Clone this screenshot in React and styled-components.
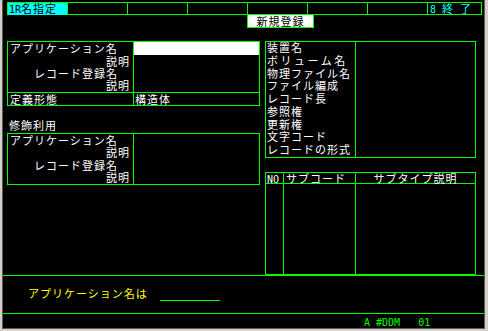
import React from "react";
import styled, { createGlobalStyle } from "styled-components";

const GREEN = "#00ff00";
const CYAN = "#00ffff";
const YELLOW = "#ffff00";

const GlobalStyle = createGlobalStyle`
  html, body {
    margin: 0;
    padding: 0;
    background: #d4d0c8;
  }
  * { box-sizing: border-box; }
`;

const Window = styled.div`
  width: 488px;
  height: 331px;
  background: #d4d0c8;
  padding: 0 3px 2px 2px;
`;

const Screen = styled.div`
  height: 100%;
  background: #000;
  border: 1px solid #5a5a5a;
  border-top: none;
  display: flex;
  flex-direction: column;
  color: #fff;
  font-family: "Noto Sans CJK JP", sans-serif;
  font-size: 11px;
  letter-spacing: 1px;
  line-height: 13px;
  white-space: pre;
`;

const Mono = styled.span`
  font-family: "DejaVu Sans Mono", monospace;
  font-size: 10px;
  letter-spacing: 0;
`;

const TopBar = styled.div`
  margin: 2px 0 0 4px;
  width: 475px;
  height: 13px;
  border: 1px solid ${GREEN};
  display: grid;
  grid-template-columns: repeat(7, 60px) 1fr;
`;

const BarCell = styled.div`
  border-right: ${(p) => (p.$last ? "none" : `1px solid ${GREEN}`)};
  background: ${(p) => p.$bg || "transparent"};
  color: ${(p) => p.$color || "#fff"};
  line-height: 11px;
  padding-left: ${(p) => p.$pad || 1}px;
`;

const NewButton = styled.div`
  margin-left: 244px;
  width: 67px;
  height: 13px;
  background: #fff;
  color: #000;
  border: 1px solid ${GREEN};
  border-top: none;
  text-align: center;
  line-height: 12px;
`;

const Main = styled.div`
  margin-top: 13px;
  padding-left: 4px;
  display: flex;
  align-items: flex-start;
  gap: 5px;
`;

const LeftCol = styled.div`
  width: 253px;
  display: flex;
  flex-direction: column;
`;

const RightCol = styled.div`
  width: 211px;
  display: flex;
  flex-direction: column;
`;

const FieldBox = styled.div`
  border: 1px solid ${GREEN};
  display: grid;
  grid-template-columns: 126px 1fr;
  margin-top: ${(p) => p.$top || 0}px;
`;

const Label = styled.div`
  border-right: 1px solid ${GREEN};
  border-top: ${(p) => (p.$split ? `1px solid ${GREEN}` : "none")};
  height: ${(p) => p.$h}px;
  line-height: ${(p) => p.$h - 1}px;
  padding-left: ${(p) => p.$pad || 2}px;
`;

const Value = styled.div`
  border-top: ${(p) => (p.$split ? `1px solid ${GREEN}` : "none")};
  background: ${(p) => (p.$input ? "#fff" : "transparent")};
  height: ${(p) => p.$h}px;
  line-height: ${(p) => p.$h - 1}px;
  padding-left: 1px;
`;

const SectionTitle = styled.div`
  padding: 13px 0 0 2px;
  line-height: 13px;
`;

const InfoBox = styled.div`
  height: 117px;
  border: 1px solid ${GREEN};
  display: grid;
  grid-template-columns: 90px 1fr;
`;

const InfoLabels = styled.div`
  border-right: 1px solid ${GREEN};
  display: flex;
  flex-direction: column;
  padding-left: 1px;
`;

const InfoLabel = styled.div`
  height: 12.78px;
  line-height: 11px;
  letter-spacing: ${(p) => p.$spacing || 1}px;
`;

const SubTable = styled.div`
  margin-top: 14px;
  height: 103px;
  border: 1px solid ${GREEN};
  display: grid;
  grid-template-columns: 18px 72px 1fr;
  grid-template-rows: 11px 1fr;
`;

const HeadCell = styled.div`
  border-bottom: 1px solid ${GREEN};
  border-right: ${(p) => (p.$last ? "none" : `1px solid ${GREEN}`)};
  line-height: 10px;
  padding-left: ${(p) => p.$pad || 0}px;
  text-align: ${(p) => p.$align || "left"};
`;

const BodyCell = styled.div`
  border-right: ${(p) => (p.$last ? "none" : `1px solid ${GREEN}`)};
`;

const PromptArea = styled.div`
  height: 40px;
  border-top: 1px solid ${GREEN};
  border-bottom: 1px solid ${GREEN};
  padding: 11px 0 0 25px;
  display: flex;
  align-items: flex-start;
`;

const PromptText = styled.span`
  color: ${YELLOW};
  line-height: 13px;
`;

const InputLine = styled.span`
  margin-left: 12px;
  width: 60px;
  height: 14px;
  border-bottom: 1px solid ${GREEN};
`;

const StatusBar = styled.div`
  padding-left: 361px;
  padding-top: 2px;
  color: ${GREEN};
  line-height: 11px;
`;

const leftRows = [
  { label: "アプリケーション名", pad: 2, h: 13 },
  { label: "説明", pad: 98, h: 13 },
  { label: "レコード登録名", pad: 26, h: 12 },
  { label: "説明", pad: 98, h: 12 },
];

const subRows = [
  { label: "アプリケーション名", pad: 2, h: 13 },
  { label: "説明", pad: 98, h: 12 },
  { label: "レコード登録名", pad: 26, h: 13 },
  { label: "説明", pad: 98, h: 12 },
];

const infoLabels = [
  { text: "装置名" },
  { text: "ボリューム名", spacing: 2.5 },
  { text: "物理ファイル名" },
  { text: "ファイル編成" },
  { text: "レコード長" },
  { text: "参照権" },
  { text: "更新権" },
  { text: "文字コード" },
  { text: "レコードの形式" },
];

function App() {
  return (
    <Window>
      <GlobalStyle />
      <Screen>
        <TopBar>
          <BarCell $bg={CYAN} $color="#000">
            <Mono>1R</Mono>名指定
          </BarCell>
          {[0, 1, 2, 3, 4, 5].map((i) => (
            <BarCell key={i} />
          ))}
          <BarCell $last $color={CYAN} $pad={2}>
            <Mono>8 </Mono>終<Mono> </Mono>了
          </BarCell>
        </TopBar>
        <NewButton>新規登録</NewButton>

        <Main>
          <LeftCol>
            <FieldBox>
              {leftRows.map((r, i) => (
                <React.Fragment key={i}>
                  <Label $pad={r.pad} $h={r.h}>{r.label}</Label>
                  <Value $h={r.h} $input={i === 0} />
                </React.Fragment>
              ))}
              <Label $split $h={13}>定義形態</Label>
              <Value $split $h={13}>構造体</Value>
            </FieldBox>

            <SectionTitle>修飾利用</SectionTitle>
            <FieldBox $top={1}>
              {subRows.map((r, i) => (
                <React.Fragment key={i}>
                  <Label $pad={r.pad} $h={r.h}>{r.label}</Label>
                  <Value $h={r.h} />
                </React.Fragment>
              ))}
            </FieldBox>
          </LeftCol>

          <RightCol>
            <InfoBox>
              <InfoLabels>
                {infoLabels.map((l) => (
                  <InfoLabel key={l.text} $spacing={l.spacing}>
                    {l.text}
                  </InfoLabel>
                ))}
              </InfoLabels>
              <div />
            </InfoBox>

            <SubTable>
              <HeadCell $pad={1}>
                <Mono>NO</Mono>
              </HeadCell>
              <HeadCell $pad={2}>サブコード</HeadCell>
              <HeadCell $last $align="center">
                サブタイプ説明
              </HeadCell>
              <BodyCell />
              <BodyCell />
              <BodyCell $last />
            </SubTable>
          </RightCol>
        </Main>

        <PromptArea>
          <PromptText>アプリケーション名は</PromptText>
          <InputLine />
        </PromptArea>
        <StatusBar>
          <Mono>A #DDM   01</Mono>
        </StatusBar>
      </Screen>
    </Window>
  );
}

export default App;
